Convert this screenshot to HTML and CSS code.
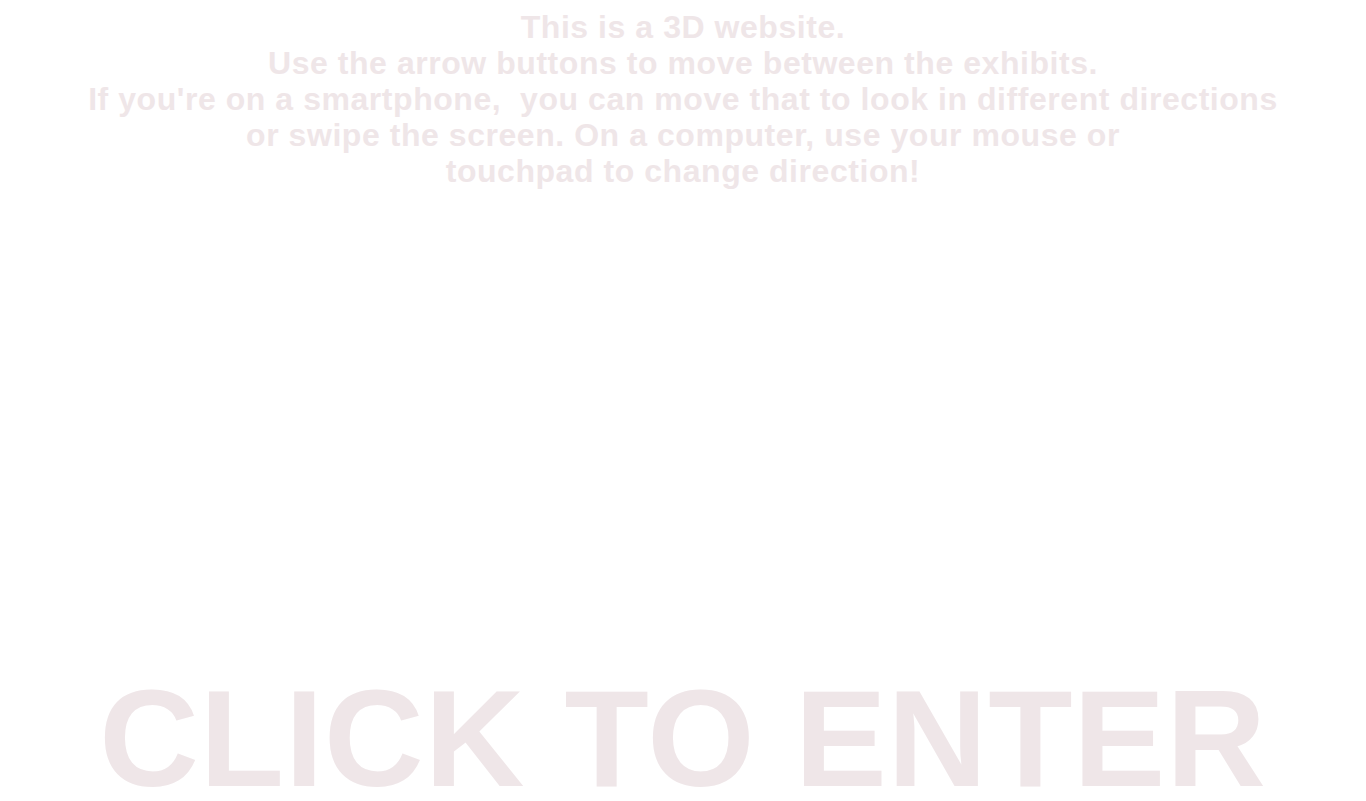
FILE: index.html
```html
<!DOCTYPE html>
<html lang="en">
<head>
<meta charset="utf-8">
<title>3D website</title>
<link rel="stylesheet" href="styles.css">
</head>
<body>
<main class="intro">
  <p class="instructions">This is a 3D website.<br>Use the arrow buttons to move between the exhibits.<br>If you're on a smartphone,&nbsp; you can move that to look in different directions<br>or swipe the screen. On a computer, use your mouse or<br>touchpad to change direction!</p>
  <div class="enter">CLICK TO ENTER</div>
</main>
</body>
</html>
```

FILE: styles.css
```css
html, body {
  margin: 0;
  padding: 0;
  background: #ffffff;
  overflow: hidden;
}
.intro {
  height: 100vh;
  display: flex;
  flex-direction: column;
  align-items: center;
  font-family: "Liberation Sans", Arial, sans-serif;
  font-weight: bold;
  color: #efe6e8;
  text-align: center;
}
.instructions {
  margin: 9px 0 0;
  font-size: 32px;
  line-height: 36px;
  letter-spacing: 0.55px;
}
.enter {
  margin-top: auto;
  margin-bottom: 3px;
  font-size: 138px;
  line-height: 120px;
  letter-spacing: 0.9px;
  white-space: nowrap;
}
```
